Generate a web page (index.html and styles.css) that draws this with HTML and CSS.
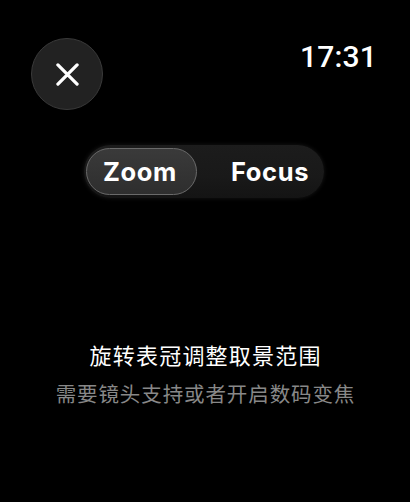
FILE: index.html
```html
<!DOCTYPE html>
<html lang="zh">
<head>
<meta charset="utf-8">
<link rel="stylesheet" href="styles.css">
</head>
<body>
<div class="screen">
  <header class="top">
    <button class="close" aria-label="关闭">
      <svg viewBox="0 0 24 24" width="24" height="24"><path d="M2 2 L22 22 M22 2 L2 22" stroke="#fff" stroke-width="3.4" stroke-linecap="round" fill="none"/></svg>
    </button>
    <div class="time">17:31</div>
  </header>
  <div class="seg-wrap">
    <div class="seg">
      <div class="seg-item active">Zoom</div>
      <div class="seg-item other">Focus</div>
    </div>
  </div>
  <div class="msg">
    <p class="main">旋转表冠调整取景范围</p>
    <p class="sub">需要镜头支持或者开启数码变焦</p>
  </div>
</div>
</body>
</html>
```
FILE: styles.css
```css
html, body {
  margin: 0;
  padding: 0;
  background: #000;
}
.screen {
  width: 410px;
  height: 502px;
  background: #000;
  display: flex;
  flex-direction: column;
  font-family: "Inter", "Roboto", "Noto Sans CJK SC", sans-serif;
  color: #fff;
  overflow: hidden;
}
.top {
  display: flex;
  justify-content: space-between;
  align-items: flex-start;
  padding: 38px 33px 0 31px;
}
.close {
  width: 72px;
  height: 72px;
  border-radius: 50%;
  background: #222;
  border: 1.5px solid #3a3a3a;
  box-sizing: border-box;
  display: flex;
  align-items: center;
  justify-content: center;
  padding: 0;
}
.close svg {
  width: 23px;
  height: 23px;
}
.time {
  font-family: "Roboto", "Inter", sans-serif;
  font-weight: 500;
  font-size: 30px;
  line-height: 36px;
  letter-spacing: 0.2px;
  margin-top: 1px;
}
.seg-wrap {
  display: flex;
  padding-left: 84px;
  margin-top: 35px;
}
.seg {
  width: 240px;
  height: 53px;
  border-radius: 27px;
  background: linear-gradient(180deg, #1c1c1c 0%, #191919 60%, #141414 100%);
  box-shadow: 0 0 4px rgba(40,40,40,0.6);
  display: flex;
  align-items: center;
  padding: 0 0 0 2px;
  box-sizing: border-box;
}
.seg-item {
  font-family: "Inter", "Roboto", sans-serif;
  font-weight: 700;
  font-size: 25.5px;
  letter-spacing: 0.6px;
  color: #fff;
  display: flex;
  align-items: center;
}
.seg-item.active {
  width: 111px;
  height: 47px;
  border-radius: 24px;
  box-sizing: border-box;
  border: 1.5px solid #6a6a6a;
  background: linear-gradient(180deg, #3a3a3a 0%, #2e2e2e 100%);
  justify-content: center;
  padding-right: 3px;
}
.seg-item.other {
  padding-left: 34px;
}
.msg {
  margin-top: 137px;
  text-align: center;
  font-family: "Noto Sans CJK SC", sans-serif;
}
.msg p {
  margin: 0;
}
.main {
  color: #fff;
  font-size: 22px;
  line-height: 39px;
  letter-spacing: 1.2px;
  padding-left: 1.2px;
}
.sub {
  color: #888;
  font-size: 20.5px;
  line-height: 38px;
  letter-spacing: 0.9px;
  padding-left: 0.9px;
}
```
